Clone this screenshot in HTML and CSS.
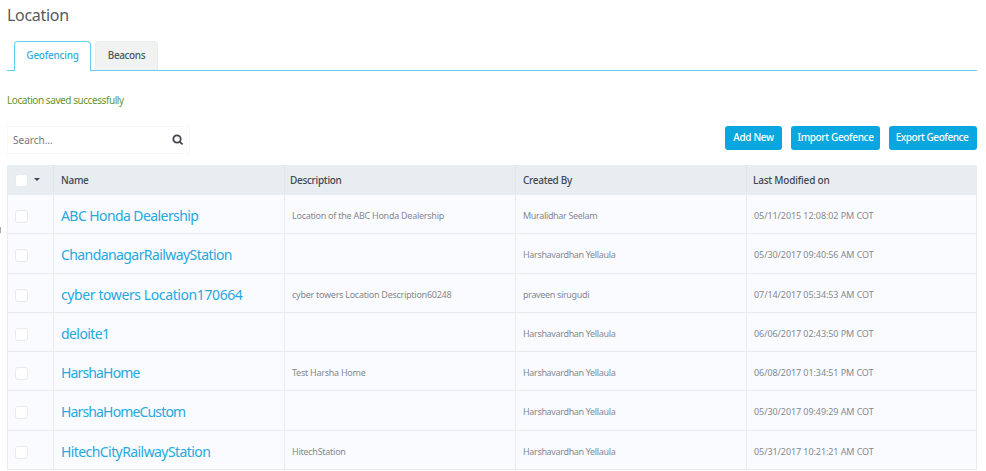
FILE: index.html
```
<!DOCTYPE html>
<html lang="en">
<head>
<meta charset="utf-8">
<title>Location</title>
<link rel="stylesheet" href="styles.css">
</head>
<body>
<main class="page">
  <h1 class="title">Location</h1>
  <nav class="tabs">
    <a class="tab tab-active">Geofencing</a>
    <a class="tab">Beacons</a>
  </nav>
  <p class="notice">Location saved successfully</p>
  <div class="toolbar">
    <div class="search">
      <span class="placeholder">Search...</span>
      <svg class="search-icon" viewBox="0 0 12 12"><circle cx="5" cy="5" r="3.7"/><path d="M7.8 7.8L10.6 10.4"/></svg>
    </div>
    <div class="actions">
      <button class="btn add">Add New</button>
      <button class="btn import">Import Geofence</button>
      <button class="btn export">Export Geofence</button>
    </div>
  </div>
  <section class="table">
    <div class="row head">
      <div class="cell pick"><i class="box"></i><i class="caret"></i></div>
      <div class="cell">Name</div>
      <div class="cell about">Description</div>
      <div class="cell">Created By</div>
      <div class="cell modified">Last Modified on</div>
    </div>
    <div class="row">
      <div class="cell pick"><i class="box"></i></div>
      <div class="cell name">ABC Honda Dealership</div>
      <div class="cell desc">Location of the ABC Honda Dealership</div>
      <div class="cell">Muralidhar Seelam</div>
      <div class="cell date">05/11/2015 12:08:02 PM COT</div>
    </div>
    <div class="row">
      <div class="cell pick"><i class="box"></i></div>
      <div class="cell name">ChandanagarRailwayStation</div>
      <div class="cell desc"></div>
      <div class="cell">Harshavardhan Yellaula</div>
      <div class="cell date">05/30/2017 09:40:56 AM COT</div>
    </div>
    <div class="row">
      <div class="cell pick"><i class="box"></i></div>
      <div class="cell name numbered">cyber towers Location170664</div>
      <div class="cell desc">cyber towers Location Description60248</div>
      <div class="cell">praveen sirugudi</div>
      <div class="cell date">07/14/2017 05:34:53 AM COT</div>
    </div>
    <div class="row">
      <div class="cell pick"><i class="box"></i></div>
      <div class="cell name">deloite1</div>
      <div class="cell desc"></div>
      <div class="cell">Harshavardhan Yellaula</div>
      <div class="cell date">06/06/2017 02:43:50 PM COT</div>
    </div>
    <div class="row">
      <div class="cell pick"><i class="box"></i></div>
      <div class="cell name compact">HarshaHome</div>
      <div class="cell desc">Test Harsha Home</div>
      <div class="cell">Harshavardhan Yellaula</div>
      <div class="cell date">06/08/2017 01:34:51 PM COT</div>
    </div>
    <div class="row">
      <div class="cell pick"><i class="box"></i></div>
      <div class="cell name compact">HarshaHomeCustom</div>
      <div class="cell desc"></div>
      <div class="cell">Harshavardhan Yellaula</div>
      <div class="cell date">05/30/2017 09:49:29 AM COT</div>
    </div>
    <div class="row">
      <div class="cell pick"><i class="box"></i></div>
      <div class="cell name">HitechCityRailwayStation</div>
      <div class="cell desc">HitechStation</div>
      <div class="cell">Harshavardhan Yellaula</div>
      <div class="cell date">05/31/2017 10:21:21 AM COT</div>
    </div>
  </section>
  <i class="edge-handle"></i>
</main>
</body>
</html>
```
FILE: styles.css
```
* { box-sizing: border-box; }
html, body { margin: 0; height: 471px; overflow: hidden; background: #fff; }
body { font-family: "Noto Sans", "Open Sans", sans-serif; font-size: 10px; color: #4f555e; }
.page { position: relative; width: 970px; margin-left: 7px; }
.title { margin: 0; padding-top: 4px; height: 41px; font-size: 16px; line-height: 23px; font-weight: 400; letter-spacing: -0.3px; color: #555a62; }
.tabs { display: flex; gap: 4px; height: 30px; padding-left: 7px; background: linear-gradient(#66cdf2, #66cdf2) left bottom / 100% 1.5px no-repeat; }
.tab { width: 63px; height: 29px; border: 1px solid #ebeded; border-bottom: 0; border-radius: 4px 4px 0 0; background: #f1f3f3; text-align: center; line-height: 27px; letter-spacing: -0.4px; font-weight: 500; }
.tab-active { width: 77px; height: 30px; border: 1.5px solid #66cdf2; border-width: 1.5px 1.5px 0; background: #fff; color: #35ade0; letter-spacing: -0.25px; }
.notice { margin: 22px 0 0; line-height: 14px; color: #5f9632; letter-spacing: -0.43px; }
.toolbar { display: flex; justify-content: space-between; margin-top: 19px; height: 39px; }
.search { display: flex; align-items: center; justify-content: space-between; width: 183px; height: 28px; padding: 0 5px 0 5px; border: 1px solid #f8f8f8; color: #777; }
.search-icon { width: 12px; height: 12px; fill: none; stroke: #41464e; stroke-width: 1.8; }
.actions { display: flex; gap: 9px; }
.btn { height: 24px; padding: 0 0 2px; border: 0; border-radius: 3px; background: #09a6df; color: #fff; font: 500 10px "Noto Sans", sans-serif; letter-spacing: -0.35px; white-space: nowrap; }
.add { width: 57px; }
.import { width: 89px; }
.export { width: 88px; padding-right: 2px; letter-spacing: -0.45px; }
.table { border-left: 1px solid #eaecef; border-right: 1px solid #eaecef; }
.row { display: grid; grid-template-columns: 46px 231px 231px 231px 1fr; height: 39.25px; background: #fafbff; border-bottom: 1px solid #eaebee; }
.cell { display: flex; align-items: center; padding: 3px 7px 0 7px; border-right: 1px solid #eaebee; font-size: 9px; letter-spacing: -0.34px; color: #85898e; white-space: nowrap; }
.cell:last-child { border-right: 0; }
.desc { padding-left: 7px; letter-spacing: -0.26px; }
.date { letter-spacing: -0.08px; }
.name { font-size: 14px; color: #27a8de; letter-spacing: -0.58px; }
.numbered { letter-spacing: -0.4px; }
.compact { letter-spacing: -0.85px; }
.pick { padding: 5px 0 0 7px; }
.head { height: 30px; background: #e8edf1; border-bottom-color: #e8edf1; }
.head .cell { padding-top: 0; font-size: 10px; font-weight: 500; letter-spacing: -0.3px; color: #3f4753; border-right-color: #e2e6ea; }
.head .about { padding-left: 5px; }
.head .modified { padding-left: 6px; letter-spacing: -0.2px; }
.head .pick { padding-top: 2px; }
.box { width: 13px; height: 13px; border: 1px solid #e9eaed; border-radius: 3px; background: #fff; }
.caret { margin: -3px 0 0 6px; border: 3px solid transparent; border-top-color: #3f4753; border-bottom: 0; }
.edge-handle { position: absolute; left: -7px; top: 227px; width: 1px; height: 6px; background: #a9a9a9; }
```
